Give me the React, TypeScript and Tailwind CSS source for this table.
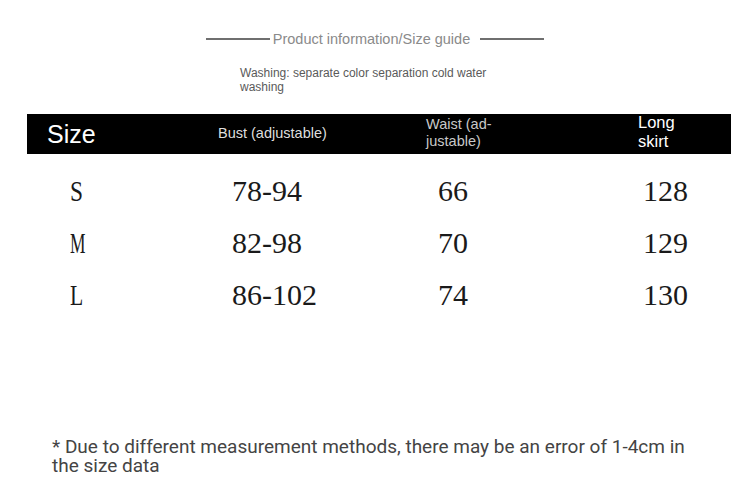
import React from 'react';

const ROWS = [
  { size: 'S', fit: 'scale-x-[0.78]', bust: '78-94', waist: '66', skirt: '128' },
  { size: 'M', fit: 'scale-x-[0.58]', bust: '82-98', waist: '70', skirt: '129' },
  { size: 'L', fit: 'scale-x-[0.72]', bust: '86-102', waist: '74', skirt: '130' },
];

const cols = 'grid grid-cols-[191px_208px_212px_1fr]';

export default function App() {
  return (
    <div className="w-[750px] h-[498px] bg-white overflow-hidden font-['Liberation_Sans',sans-serif]">
      {/* Title */}
      <div className="pt-[29px] flex items-center justify-center gap-[3px]">
        <div className="w-[64px] h-[1.5px] bg-[#6f6f6f]" />
        <span className="text-[14.5px] leading-[20px] text-[#8a8a8a]">Product information/Size guide</span>
        <div className="w-[64px] h-[1.5px] bg-[#6f6f6f] ml-[7px]" />
      </div>

      {/* Washing note */}
      <p className="mt-[17px] ml-[240px] w-[260px] text-[12px] leading-[14px] text-[#5a5a5a]">
        Washing: separate color separation cold water washing
      </p>

      {/* Header bar */}
      <div className={`${cols} mt-[20px] ml-[27px] mr-[19px] h-[40px] bg-black items-center`}>
        <span className="pl-[20px] text-[25px] text-white leading-none">Size</span>
        <span className="text-[14.5px] text-[#dedede]">Bust (adjustable)</span>
        <span className="w-[80px] -mt-[3px] text-[14.5px] leading-[17px] text-[#c8c8c8]">Waist (ad-justable)</span>
        <span className="w-[50px] -mt-[4px] text-[16.5px] leading-[19px] text-white">Long skirt</span>
      </div>

      {/* Rows */}
      <div className="mt-[10px] ml-[27px] mr-[19px] font-['Liberation_Serif',serif] text-[30px] text-[#1a1a1a]">
        {ROWS.map((r) => (
          <div key={r.size} className={`${cols} h-[52px] items-center`}>
            <span className="pl-[43px]">
              <span className={`inline-block origin-left ${r.fit}`}>{r.size}</span>
            </span>
            <span className="pl-[14px]">{r.bust}</span>
            <span className="pl-[12px]">{r.waist}</span>
            <span className="pl-[5px]">{r.skirt}</span>
          </div>
        ))}
      </div>

      {/* Footer note */}
      <p className="mt-[117px] ml-[52px] w-[650px] font-['Roboto',sans-serif] text-[19px] leading-[19px] text-[#444]">
        * Due to different measurement methods, there may be an error of 1-4cm in the size data
      </p>
    </div>
  );
}
